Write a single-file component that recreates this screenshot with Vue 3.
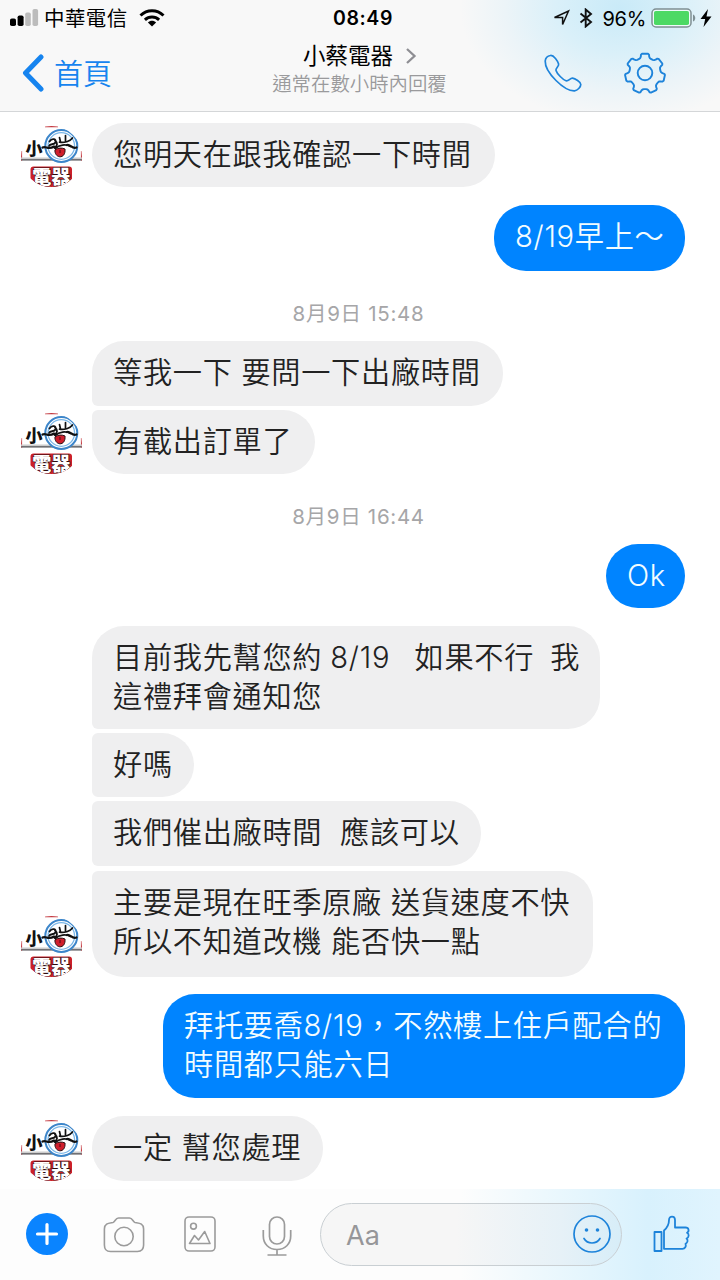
<script setup>
const items = [
  { side: 'in', w: 403, h: 64, gap: 11, avatar: true, lines: ['您明天在跟我確認一下時間'] },
  { side: 'out', w: 191, h: 66, gap: 18, lines: ['8/19早上～'] },
  { side: 'date', h: 26, gap: 28, text: '8月9日 15:48' },
  { side: 'in', w: 411, h: 65, gap: 16, top: true, lines: ['等我一下 要問一下出廠時間'] },
  { side: 'in', w: 223, h: 64, gap: 4, bottom: true, avatar: true, lines: ['有截出訂單了'] },
  { side: 'date', h: 26, gap: 28, text: '8月9日 16:44' },
  { side: 'out', w: 79, h: 64, gap: 16, lines: ['Ok'] },
  { side: 'in', w: 508, h: 103, gap: 18, top: true, spaced: true, lines: ['目前我先幫您約 8/19   如果不行  我', '這禮拜會通知您'] },
  { side: 'in', w: 102, h: 64, gap: 4, top: true, bottom: true, lines: ['好嗎'] },
  { side: 'in', w: 389, h: 65, gap: 4, top: true, bottom: true, lines: ['我們催出廠時間  應該可以'] },
  { side: 'in', w: 501, h: 106, gap: 5, bottom: true, avatar: true, lines: ['主要是現在旺季原廠 送貨速度不快', '所以不知道改機 能否快一點'] },
  { side: 'out', w: 522, h: 104, gap: 17, lines: ['拜托要喬8/19，不然樓上住戶配合的', '時間都只能六日'] },
  { side: 'in', w: 231, h: 65, gap: 18, avatar: true, lines: ['一定 幫您處理'] },
]

// Outline of the settings cog: seven soft teeth around the hub.
const cog = (() => {
  const pts = []
  for (let i = 0; i < 7; i++) {
    const base = -90 + (i * 360) / 7
    for (const [off, r] of [[-22, 15.7], [-17, 16.2], [-14, 17.4], [-12, 19.3], [-8.5, 20], [8.5, 20], [12, 19.3], [14, 17.4], [17, 16.2], [22, 15.7]]) {
      const a = ((base + off) * Math.PI) / 180
      pts.push(`${(21 + r * Math.cos(a)).toFixed(2)},${(21.5 + r * Math.sin(a)).toFixed(2)}`)
    }
  }
  return pts.join(' ')
})()
</script>

<template>
  <div class="screen">
    <header class="top">
      <div class="status">
        <div class="status-left">
          <svg class="signal" width="29" height="18" viewBox="0 0 29 18">
            <rect x="0" y="9.500" width="6" height="7.500" rx="1.800" fill="#000" />
            <rect x="7.600" y="6.500" width="6" height="10.500" rx="1.800" fill="#000" />
            <rect x="15.200" y="3.500" width="5.600" height="13.500" rx="1.800" fill="#bcbcbc" />
            <rect x="22.500" y="0" width="5.600" height="17" rx="1.800" fill="#bcbcbc" />
          </svg>
          <span class="carrier">中華電信</span>
          <svg class="wifi" width="26" height="18" viewBox="0 0 26 18">
            <g fill="none" stroke="#000" stroke-width="3">
              <path d="M1.500 6.500C8 .2 18 .2 24.500 6.500" />
              <path d="M5.900 10.800C10 7 16 7 20.100 10.800" />
            </g>
            <path d="M8.900 13.400C11.200 11.300 14.800 11.300 17.100 13.400L13 17.500z" />
          </svg>
        </div>
        <div class="clock">08:49</div>
        <div class="status-right">
          <svg width="18" height="18" viewBox="0 0 18 18"><path d="M1.500 8.500L15.500 2 9.600 15.500V8.500z" fill="none" stroke="#111" stroke-width="1.500" stroke-linejoin="miter" /></svg>
          <svg class="bt" width="14" height="20" viewBox="0 0 14 20"><path d="M1.500 5.500L12 14 6.700 18.500V1.500L12 6 1.500 14.500" fill="none" stroke="#111" stroke-width="1.900" /></svg>
          <span class="pct">96%</span>
          <svg class="battery" width="46" height="20" viewBox="0 0 46 20">
            <rect x="1" y="1" width="39" height="18" rx="4" fill="#eefafa" stroke="#7f8f93" stroke-width="1.500" />
            <rect x="3" y="3" width="35" height="14" rx="1.800" fill="#4cd964" />
            <path d="M42 6.500c3 1 3 6 0 7z" fill="#7f8f93" />
          </svg>
          <svg width="12" height="18" viewBox="0 0 12 18"><path d="M8 0L.5 10H5.200L3.500 18 11.500 7.500H6.500z" /></svg>
        </div>
      </div>
      <div class="nav">
        <div class="back">
          <svg width="22" height="38" viewBox="0 0 22 38"><path d="M19 3L3.500 19 19 35" fill="none" stroke="#1684ef" stroke-width="5" stroke-linecap="round" stroke-linejoin="round" /></svg>
          <span>首頁</span>
        </div>
        <div class="title">
          <div class="name">小蔡電器<svg width="12" height="18" viewBox="0 0 12 18"><path d="M2 2L9.500 9 2 16" fill="none" stroke="#8e8e93" stroke-width="2.300" /></svg></div>
          <div class="sub">通常在數小時內回覆</div>
        </div>
        <div class="actions">
          <svg width="38" height="38" viewBox="0 0 38 38"><path d="M6.500 1.500C3.500 2 1.500 4 1.200 7 1 13 6.500 21 12 26.500 17.500 32 24.500 37 30.500 36.800 33.500 36.500 36.800 33 36.800 30.500 36.800 28 31 24.600 28.500 24.200 26 24 24.500 27.500 22 26.800 19 25.800 13 19.800 12 16.500 11.200 14 15.300 12.500 14.600 10 13.800 7.200 9.800 1 6.500 1.500z" fill="none" stroke="#1d83da" stroke-width="1.700" stroke-linejoin="round" /></svg>
          <svg width="42" height="42" viewBox="0 0 42 42">
            <polygon :points="cog" fill="none" stroke="#1d83da" stroke-width="1.900" stroke-linejoin="round" />
            <circle cx="21" cy="21" r="7.300" fill="none" stroke="#1d83da" stroke-width="1.900" />
          </svg>
        </div>
      </div>
    </header>

    <main class="thread">
      <div v-for="(m, i) in items" :key="i" class="row" :class="m.side" :style="{ marginTop: m.gap + 'px', height: m.h + 'px' }">
        <span v-if="m.side === 'date'" class="stamp">{{ m.text }}</span>
        <template v-else>
          <div v-if="m.side === 'in'" class="avatar">
            <svg v-if="m.avatar" width="61" height="61" viewBox="0 0 61 61">
              <defs><clipPath :id="'face' + i"><circle cx="30.500" cy="30.500" r="30.500" /></clipPath></defs>
              <g :clip-path="`url(#face${i})`">
                <rect width="61" height="61" fill="#fff" />
                <path d="M24 .5h13M.4 25v10M60.600 25v10" stroke="#c43a40" stroke-width="1.400" />
                <rect x="0" y="31.500" width="61" height="2" fill="#ccc" />
                <path d="M0 33.800H61" stroke="#48484c" stroke-width="1.200" />
                <circle cx="40.300" cy="20" r="16" fill="#fff" stroke="#3d86ca" stroke-width="2" />
                <circle cx="40.300" cy="20" r="13.300" fill="#fff" stroke="#7bb7e8" stroke-width="1.300" />
                <text x="4.500" y="28.500" class="logo-small">小</text>
                <g fill="none" stroke="#111" stroke-linecap="round">
                  <path d="M21.500 21.500C25 19.500 27 24.500 33 20.500M46 19C49 17.500 51 23.500 55.500 21.500" stroke-width="2.200" />
                  <path d="M28.500 15.500C31 11.500 36 13 34.500 16.500 33 19.500 29 17 28 20M34 14.500C37 17 36.500 20 33.500 22" stroke-width="1.800" />
                  <path d="M38.500 11.500l1 4.500M38.500 16.200C43 17 49 15.500 51.500 12M44.500 9.500v6M34.500 22.500C38 18.500 45 18 49.500 20.500" stroke-width="1.700" />
                </g>
                <path d="M34 23.800C37 21.800 41 21.500 44 23 44.500 28 42 31 38.800 30.800 35.500 30.500 33.500 27 34 23.800z" fill="#cf1f2c" stroke="#291114" stroke-width="1" />
                <path d="M39 24v3" stroke="#4a0b12" />
                <rect x="9.500" y="40.500" width="41.500" height="22" rx="3" fill="#cc2029" />
                <text x="11.300" y="57.500" class="logo-big">電器</text>
              </g>
            </svg>
          </div>
          <div class="bubble" :class="{ 'flat-bottom': m.top, 'flat-top': m.bottom, spaced: m.spaced }" :style="{ width: m.w + 'px' }">
            <div v-for="l in m.lines" :key="l" class="line">{{ l }}</div>
          </div>
        </template>
      </div>
    </main>

    <footer class="composer">
      <svg class="plus" width="42" height="42" viewBox="0 0 42 42"><circle cx="21" cy="21" r="21" fill="#0a84ff" /><path d="M21 11.500v19M11.500 21h19" stroke="#fff" stroke-width="3.200" stroke-linecap="round" /></svg>
      <svg class="camera" width="42" height="38" viewBox="0 0 42 38" fill="none" stroke="#9b9b9b" stroke-width="1.600">
        <path d="M10 6.500C12 6 12.500 2 15.500 2H26.500C29.500 2 30 6 32 6.500 36 7.200 40.600 7 40.600 13V29C40.600 33.500 38.500 35.500 34.500 35.500H7.500C3.500 35.500 1.400 33.500 1.400 29V13C1.400 7 6 7.200 10 6.500z" />
        <circle cx="21" cy="20.500" r="9.200" />
      </svg>
      <svg class="photo" width="32" height="36" viewBox="0 0 32 36" fill="none" stroke="#9b9b9b" stroke-width="1.600">
        <rect x="1" y="1" width="30" height="34" rx="4" /><circle cx="9.500" cy="10.200" r="2.900" />
        <path d="M5.500 27.500L10.500 19.500 14.500 24 20.700 15.500 26 27.500z" stroke-linejoin="round" />
      </svg>
      <svg class="mic" width="30" height="40" viewBox="0 0 30 40" fill="none" stroke="#9b9b9b" stroke-width="1.700">
        <rect x="7.500" y="1" width="15" height="27" rx="7.500" /><path d="M1.300 14V20C1.300 28 7 33.500 15 33.500S28.700 28 28.700 20V14M15 33.500V39M5.500 39H24.500" />
      </svg>
      <div class="field">
        <span>Aa</span>
        <svg width="38" height="38" viewBox="0 0 38 38" fill="none" stroke="#1d83da" stroke-width="1.700">
          <circle cx="19" cy="19" r="18" /><path d="M11 23.500C14.500 29.500 23.500 29.500 27 23.500" stroke-linecap="round" />
          <circle cx="13.500" cy="15" r="1.800" fill="#1d83da" stroke="none" /><circle cx="24.500" cy="15" r="1.800" fill="#1d83da" stroke="none" />
        </svg>
      </div>
      <svg class="like" width="37" height="38" viewBox="0 0 37 38" fill="none" stroke="#1d83da" stroke-width="1.800" stroke-linejoin="round">
        <rect x="1.500" y="17" width="7" height="19" />
        <path d="M11 15.500C14.500 12.500 16 9.500 16 5 16 .5 22 .5 22 5V12.500H32.500C36 12.500 36.500 16.500 34 17.800 36.500 19 36 22.500 33.500 23.500 35.500 25 34.500 28 32.500 28.800 33.500 31.500 32 33.800 29.500 33.800H11z" />
      </svg>
    </footer>
  </div>
</template>

<style>
body { background: #fff; }
</style>

<style scoped>
.screen {
  width: 720px;
  height: 1280px;
  overflow: hidden;
  display: flex;
  flex-direction: column;
  background: #fff;
  font-family: Inter, "Noto Sans CJK TC", sans-serif;
  color: #222;
}
svg { display: block; flex: none; }
.top {
  box-sizing: border-box;
  height: 112px;
  flex: none;
  border-bottom: 1px solid #d4d6d8;
  background: radial-gradient(ellipse 160px 115px at 620px 8px, #c9eaf8 0%, #daf0f9 40%, #ecf4f8 72%, rgba(248, 248, 248, 0) 100%), #f8f8f8;
}
.status {
  height: 36px;
  display: grid;
  grid-template-columns: 1fr 70px 1fr;
  align-items: center;
  color: #000;
}
.status-left, .status-right { display: flex; align-items: center; }
.status-left { padding-left: 10px; }
.carrier { font-size: 20.500px; letter-spacing: .4px; margin-left: 5px; line-height: 34px; padding-top: 2px; }
.wifi { margin-left: 11px; }
.clock { text-align: center; font-size: 19.500px; font-weight: 600; letter-spacing: .6px; white-space: nowrap; padding: 0 0 0 6px; }
.status-right { justify-content: flex-end; padding-right: 8px; }
.bt { margin-left: 8px; }
.pct { font-size: 20px; margin: 1px 5px 0 9px; letter-spacing: -.3px; }
.battery { margin-right: 3px; }
.nav {
  display: grid;
  grid-template-columns: 200px 1fr 200px;
  height: 75px;
}
.back { display: flex; align-items: center; gap: 10px; padding-left: 22px; color: #1684ef; font-size: 29px; font-weight: 350; height: 74px; }
.back span { padding-bottom: 3px; }
.title { text-align: center; }
.name { display: flex; justify-content: center; align-items: center; gap: 12px; font-size: 22.500px; line-height: 30px; height: 30px; color: #000; padding-top: 5px; }
.sub { font-size: 19.400px; line-height: 28px; color: #9a9a9c; font-weight: 350; padding-right: 1px; margin-top: -1px; }
.actions { display: flex; gap: 42px; align-items: center; padding-left: 24px; height: 73px; }
.thread { flex: 1; }
.row { display: flex; }
.row.in { padding-left: 21px; }
.row.out { justify-content: flex-end; padding-right: 35px; }
.row.date { justify-content: center; align-items: center; padding-right: 3px; }
.stamp { font-size: 20.500px; color: #a6a6a8; letter-spacing: .7px; }
.avatar { width: 61px; margin-right: 10px; display: flex; align-items: flex-end; }
.bubble {
  box-sizing: border-box;
  height: 100%;
  padding: 13px 0 0 21px;
  border-radius: 32px;
  background: #efeff0;
  font-size: 29.200px;
  letter-spacing: .7px;
  font-weight: 350;
}
.spaced { word-spacing: -.8px; }
.line { height: 38.500px; line-height: 38.500px; white-space: pre; }
.flat-bottom { border-bottom-left-radius: 6px; }
.flat-top { border-top-left-radius: 6px; }
.out .bubble { background: #0084ff; color: #f2fcff; }
.logo-small { font: 900 17px "Noto Sans CJK TC", sans-serif; fill: #111; }
.logo-big { font: 900 19px "Noto Sans CJK TC", sans-serif; fill: #fff; stroke: #2b0b0e; stroke-width: 1.200px; paint-order: stroke; }
.composer {
  box-sizing: border-box;
  flex: none;
  height: 91px;
  display: flex;
  align-items: center;
  padding: 0 0 1px 26px;
  background: linear-gradient(90deg, rgba(253, 253, 253, 1) 64%, #e6f6fd 80%, #d8f1fd 90%, #e0f4fe 100%);
}
.camera { margin-left: 35px; margin-top: 2px; }
.photo { margin-left: 39px; }
.mic { margin-left: 46px; margin-top: 3px; }
.field {
  box-sizing: border-box;
  width: 302px;
  height: 63px;
  margin-left: 28px;
  border: 1.500px solid #c9cfd3;
  border-radius: 32px;
  background: linear-gradient(90deg, #f6f6f6 45%, #e6f1f7 80%, #d7edf8 100%);
  display: flex;
  align-items: center;
  justify-content: space-between;
  padding: 0 10px 0 25px;
}
.field span { font-size: 27px; color: #969699; padding-top: 3px; }
.like { margin-left: 31px; }
</style>
